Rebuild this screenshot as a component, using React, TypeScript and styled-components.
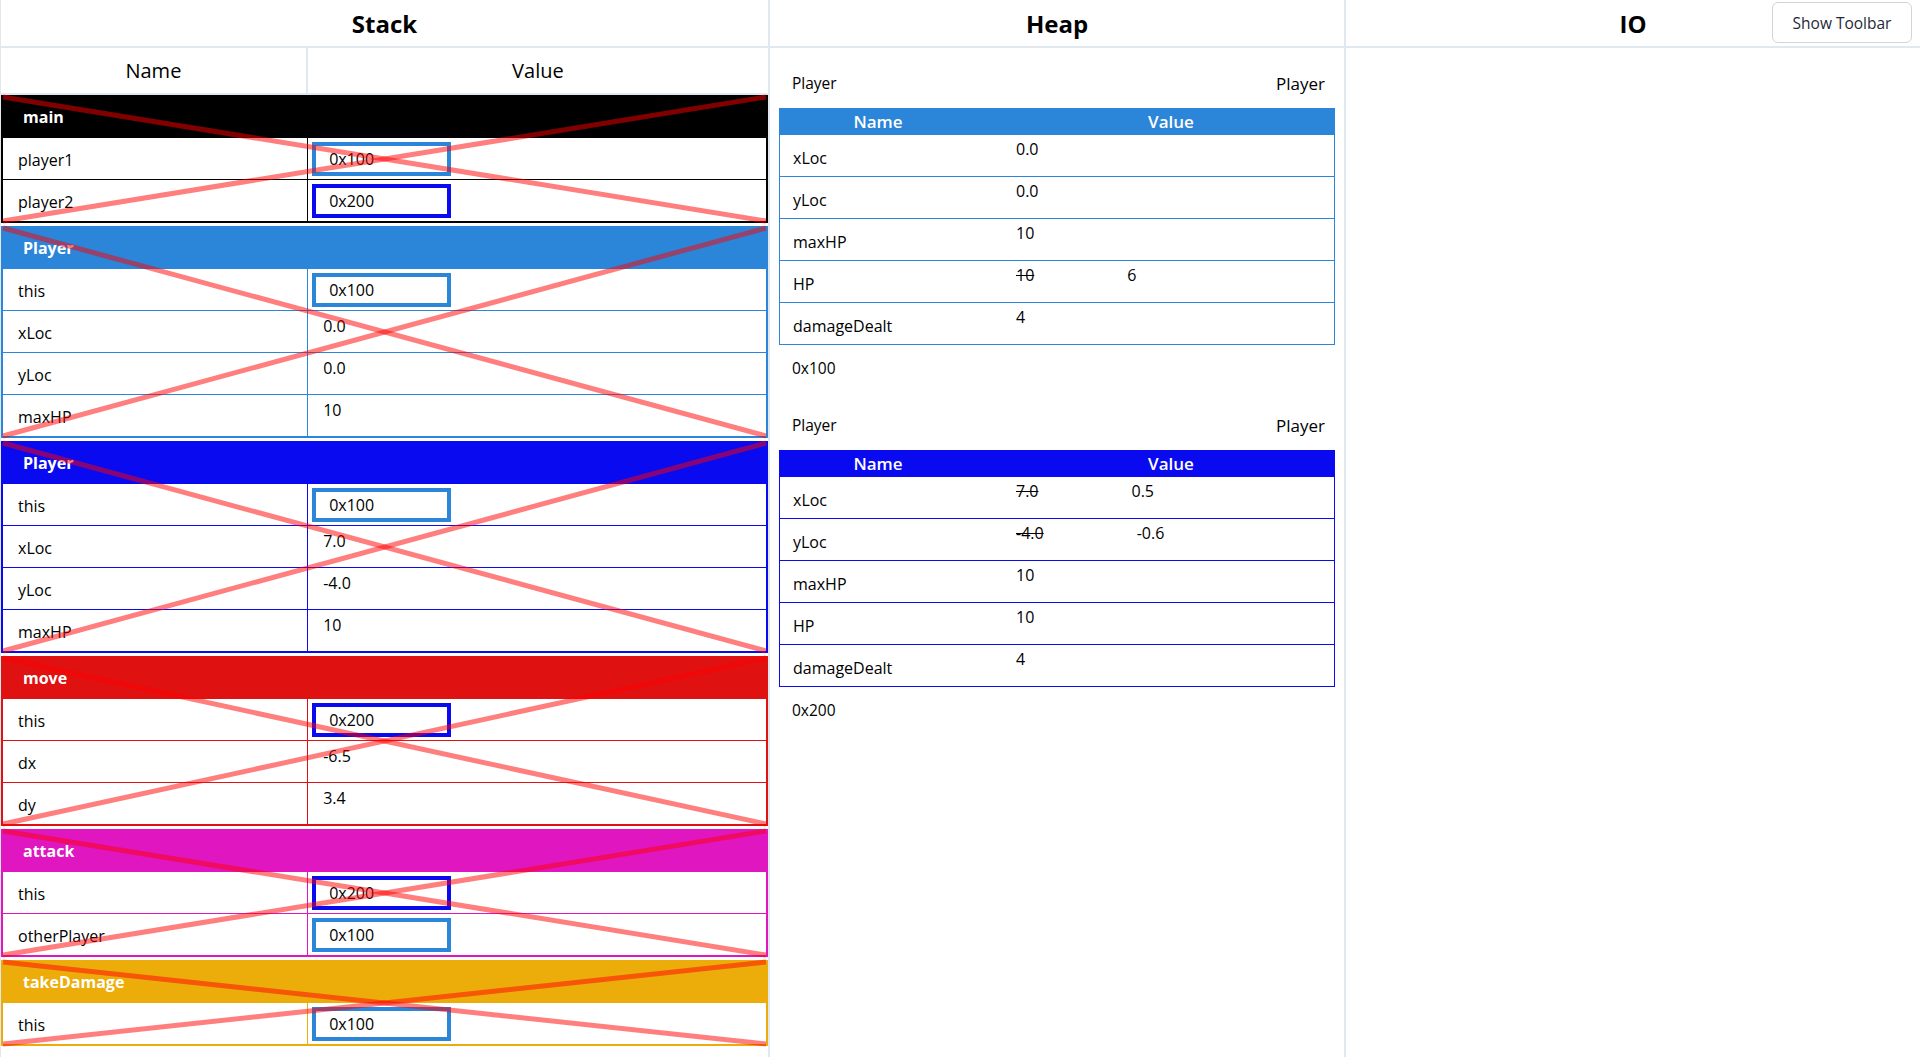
import React from 'react';
import styled, { createGlobalStyle } from 'styled-components';

const GlobalStyle = createGlobalStyle`
  html, body {
    margin: 0;
    padding: 0;
    background: #fff;
  }
  body {
    font-family: "Open Sans", "Noto Sans", Arial, sans-serif;
    color: #000;
  }
  * {
    box-sizing: border-box;
  }
`;

// Colours used for frames, pointers and heap objects
const LIGHT_BLUE = '#2b85d8';
const BLUE = '#0a0af0';
const RED = '#e01111';
const MAGENTA = '#e016c0';
const ORANGE = '#ecad0a';
const LINE = '#e2e8f0';

const pointerColors: Record<string, string> = {
  '0x100': LIGHT_BLUE,
  '0x200': BLUE,
};

// Styled components
const Page = styled.div`
  display: grid;
  grid-template-columns: 40% 30% 30%;
  height: 100vh;
  overflow: hidden;
`;

const Column = styled.section<{ $border?: number }>`
  position: relative;
  display: flex;
  flex-direction: column;
  min-width: 0;
  border-left: ${p => (p.$border ? `${p.$border}px solid ${LINE}` : 'none')};
`;

const ColumnHeader = styled.h2`
  margin: 0;
  height: 48px;
  display: flex;
  align-items: center;
  justify-content: center;
  font-size: 24px;
  font-weight: 700;
  border-bottom: 2px solid ${LINE};
`;

const StackHead = styled.div`
  display: grid;
  grid-template-columns: 40% 60%;
  height: 47px;
  border-bottom: 2px solid ${LINE};
`;

const StackHeadCell = styled.div<{ $divider?: boolean }>`
  display: flex;
  align-items: center;
  justify-content: center;
  font-size: 20px;
  font-weight: 500;
  border-right: ${p => (p.$divider ? `2px solid ${LINE}` : 'none')};
`;

const FrameList = styled.div`
  display: flex;
  flex-direction: column;
  gap: 3px;
`;

const Frame = styled.div<{ $color: string }>`
  position: relative;
  border: 2px solid ${p => p.$color};
`;

const FrameHeader = styled.div<{ $color: string }>`
  height: 40px;
  display: flex;
  align-items: center;
  padding-left: 20px;
  background: ${p => p.$color};
  color: #fff;
  font-size: 16px;
  font-weight: 700;
`;

const VarRow = styled.div<{ $color: string }>`
  display: grid;
  grid-template-columns: 40% 60%;
  height: 42px;
  border-top: 1px solid ${p => p.$color};
`;

const VarName = styled.div<{ $color: string }>`
  display: flex;
  align-items: center;
  padding: 3px 0 0 15px;
  font-size: 16px;
  border-right: 1px solid ${p => p.$color};
`;

const VarValue = styled.div`
  padding: 4px 0 0 15px;
  font-size: 16px;
  line-height: 22px;
`;

const PointerCell = styled.div`
  padding: 4px 0 0 4px;
`;

const PointerBox = styled.div<{ $color: string }>`
  width: 139px;
  height: 34px;
  display: flex;
  align-items: center;
  padding-left: 13px;
  border: 4px solid ${p => p.$color};
  font-size: 16px;
`;

const Cross = styled.svg`
  position: absolute;
  inset: 0;
  width: 100%;
  height: 100%;
  pointer-events: none;
  overflow: visible;
`;

const HeapBody = styled.div`
  display: flex;
  flex-direction: column;
  gap: 34px;
  padding: 23px 9px 0;
`;

const HeapObject = styled.div`
  display: flex;
  flex-direction: column;
`;

const ObjectLabels = styled.div`
  display: flex;
  justify-content: space-between;
  align-items: center;
  height: 24px;
  padding: 0 10px 0 13px;
  margin-bottom: 13px;
`;

const TypeLabel = styled.span<{ $large?: boolean }>`
  font-size: ${p => (p.$large ? '17px' : '15.5px')};
`;

const HeapTable = styled.div<{ $color: string }>`
  border: 1px solid ${p => p.$color};
`;

const HeapHead = styled.div<{ $color: string }>`
  display: grid;
  grid-template-columns: 196px 1fr;
  height: 25px;
  align-items: center;
  background: ${p => p.$color};
  color: #fff;
  font-size: 17px;
  font-weight: 600;
`;

const HeapHeadCell = styled.div<{ $offset?: number }>`
  text-align: center;
  padding-left: ${p => p.$offset || 0}px;
`;

const FieldRow = styled.div<{ $color: string }>`
  display: grid;
  grid-template-columns: 236px 1fr;
  height: 42px;
  border-top: 1px solid ${p => p.$color};
`;

const FieldName = styled.div`
  display: flex;
  align-items: center;
  padding: 5px 0 0 13px;
  font-size: 16px;
`;

const FieldValue = styled.div`
  padding-top: 3px;
  font-size: 16px;
  line-height: 22px;
`;

const OldValue = styled.span`
  text-decoration: line-through;
  margin-right: 93px;
`;

const Address = styled.div`
  margin-top: 12px;
  padding-left: 13px;
  font-size: 15.5px;
  line-height: 22px;
`;

const ToolbarButton = styled.button`
  position: absolute;
  top: 2px;
  right: 8px;
  width: 140px;
  height: 41px;
  background: #fff;
  border: 1px solid #d1d5db;
  border-radius: 6px;
  font-family: inherit;
  font-size: 15.5px;
  font-weight: 500;
  color: #1f2937;
  cursor: pointer;
`;

interface StackVar {
  name: string;
  value?: string;
  pointer?: string;
}

interface StackFrame {
  name: string;
  color: string;
  vars: StackVar[];
}

interface HeapField {
  name: string;
  value: string;
  old?: string;
}

interface HeapEntry {
  address: string;
  type: string;
  fields: HeapField[];
}

const frames: StackFrame[] = [
  {
    name: 'main',
    color: '#000',
    vars: [
      { name: 'player1', pointer: '0x100' },
      { name: 'player2', pointer: '0x200' },
    ],
  },
  {
    name: 'Player',
    color: LIGHT_BLUE,
    vars: [
      { name: 'this', pointer: '0x100' },
      { name: 'xLoc', value: '0.0' },
      { name: 'yLoc', value: '0.0' },
      { name: 'maxHP', value: '10' },
    ],
  },
  {
    name: 'Player',
    color: BLUE,
    vars: [
      { name: 'this', pointer: '0x100' },
      { name: 'xLoc', value: '7.0' },
      { name: 'yLoc', value: '-4.0' },
      { name: 'maxHP', value: '10' },
    ],
  },
  {
    name: 'move',
    color: RED,
    vars: [
      { name: 'this', pointer: '0x200' },
      { name: 'dx', value: '-6.5' },
      { name: 'dy', value: '3.4' },
    ],
  },
  {
    name: 'attack',
    color: MAGENTA,
    vars: [
      { name: 'this', pointer: '0x200' },
      { name: 'otherPlayer', pointer: '0x100' },
    ],
  },
  {
    name: 'takeDamage',
    color: ORANGE,
    vars: [{ name: 'this', pointer: '0x100' }],
  },
];

const heap: HeapEntry[] = [
  {
    address: '0x100',
    type: 'Player',
    fields: [
      { name: 'xLoc', value: '0.0' },
      { name: 'yLoc', value: '0.0' },
      { name: 'maxHP', value: '10' },
      { name: 'HP', old: '10', value: '6' },
      { name: 'damageDealt', value: '4' },
    ],
  },
  {
    address: '0x200',
    type: 'Player',
    fields: [
      { name: 'xLoc', old: '7.0', value: '0.5' },
      { name: 'yLoc', old: '-4.0', value: '-0.6' },
      { name: 'maxHP', value: '10' },
      { name: 'HP', value: '10' },
      { name: 'damageDealt', value: '4' },
    ],
  },
];

// Popped frames are crossed out
const CrossOut: React.FC = () => (
  <Cross>
    <line x1="0" y1="0" x2="100%" y2="100%" stroke="rgba(255,0,0,0.5)" strokeWidth="5" />
    <line x1="0" y1="100%" x2="100%" y2="0" stroke="rgba(255,0,0,0.5)" strokeWidth="5" />
  </Cross>
);

const App: React.FC = () => {
  return (
    <>
      <GlobalStyle />
      <Page>
        <Column $border={1}>
          <ColumnHeader>Stack</ColumnHeader>
          <StackHead>
            <StackHeadCell $divider>Name</StackHeadCell>
            <StackHeadCell>Value</StackHeadCell>
          </StackHead>
          <FrameList>
            {frames.map((frame, i) => (
              <Frame key={i} $color={frame.color}>
                <FrameHeader $color={frame.color}>{frame.name}</FrameHeader>
                {frame.vars.map(v => (
                  <VarRow key={v.name} $color={frame.color}>
                    <VarName $color={frame.color}>{v.name}</VarName>
                    {v.pointer ? (
                      <PointerCell>
                        <PointerBox $color={pointerColors[v.pointer]}>{v.pointer}</PointerBox>
                      </PointerCell>
                    ) : (
                      <VarValue>{v.value}</VarValue>
                    )}
                  </VarRow>
                ))}
                <CrossOut />
              </Frame>
            ))}
          </FrameList>
        </Column>

        <Column $border={2}>
          <ColumnHeader>Heap</ColumnHeader>
          <HeapBody>
            {heap.map(obj => {
              const color = pointerColors[obj.address];
              return (
                <HeapObject key={obj.address}>
                  <ObjectLabels>
                    <TypeLabel>{obj.type}</TypeLabel>
                    <TypeLabel $large>{obj.type}</TypeLabel>
                  </ObjectLabels>
                  <HeapTable $color={color}>
                    <HeapHead $color={color}>
                      <HeapHeadCell>Name</HeapHeadCell>
                      <HeapHeadCell $offset={32}>Value</HeapHeadCell>
                    </HeapHead>
                    {obj.fields.map(f => (
                      <FieldRow key={f.name} $color={color}>
                        <FieldName>{f.name}</FieldName>
                        <FieldValue>
                          {f.old && <OldValue>{f.old}</OldValue>}
                          {f.value}
                        </FieldValue>
                      </FieldRow>
                    ))}
                  </HeapTable>
                  <Address>{obj.address}</Address>
                </HeapObject>
              );
            })}
          </HeapBody>
        </Column>

        <Column $border={2}>
          <ColumnHeader>IO</ColumnHeader>
          <ToolbarButton>Show Toolbar</ToolbarButton>
        </Column>
      </Page>
    </>
  );
};

export default App;
